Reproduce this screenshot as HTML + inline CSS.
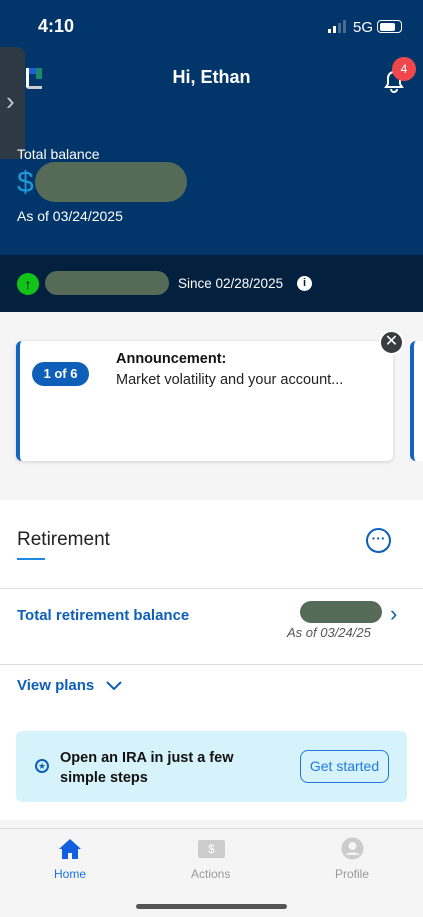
<!DOCTYPE html>
<html><head><style>
*{margin:0;padding:0;box-sizing:border-box}
body{width:423px;height:917px;overflow:hidden;font-family:"Liberation Sans",sans-serif;background:#f5f5f5;position:relative}
.a{position:absolute}
</style></head><body>
<div class="a" style="left:0;top:0;width:423px;height:255px;background:#02366a"></div>
<div class="a" style="left:0;top:255px;width:423px;height:57px;background:#03203f"></div>
<div class="a" style="left:38px;top:16px;color:#fff;font-size:18px;font-weight:bold">4:10</div>
<div class="a" style="left:328px;top:29px;width:3px;height:4px;background:#fff"></div>
<div class="a" style="left:333px;top:26px;width:3px;height:7px;background:#fff"></div>
<div class="a" style="left:338px;top:23px;width:3px;height:10px;background:#4a6b8f"></div>
<div class="a" style="left:343px;top:20px;width:3px;height:13px;background:#4a6b8f"></div>
<div class="a" style="left:353px;top:19px;color:#fff;font-size:15px">5G</div>
<div class="a" style="left:377px;top:20px;width:25px;height:13px;border:1.5px solid #fff;border-radius:4px;padding:1.5px"><div style="width:15px;height:100%;background:#fff;border-radius:2px"></div></div>
<div class="a" style="left:0;top:47px;width:25px;height:112px;background:#2d3a46;border-radius:0 8px 8px 0"></div>
<div class="a" style="left:6px;top:86px;color:#b8c6d6;font-size:26px">›</div>
<div class="a" style="left:26px;top:68px;width:16px;height:21px;border-left:3px solid #fff;border-bottom:3px solid #ccc;border-radius:0 0 0 3px"></div>
<div class="a" style="left:29px;top:68px;width:8px;height:6px;background:#1d5fd6"></div>
<div class="a" style="left:36px;top:68px;width:6px;height:11px;background:#1a8a6a"></div>
<div class="a" style="left:0;top:67px;width:423px;text-align:center;color:#fff;font-size:18px;font-weight:bold">Hi, Ethan</div>
<svg class="a" style="left:381px;top:68px" width="26" height="26" viewBox="0 0 26 26"><path d="M5 19h16l-2-3v-6a6 6 0 0 0-12 0v6z M10 21a3 3 0 0 0 6 0" fill="none" stroke="#fff" stroke-width="2"/></svg>
<div class="a" style="left:392px;top:57px;width:24px;height:24px;border-radius:50%;background:#f0474d;color:#fff;font-size:12px;text-align:center;line-height:24px">4</div>
<div class="a" style="left:17px;top:146px;color:#fff;font-size:14px">Total balance</div>
<div class="a" style="left:17px;top:166px;color:#1e9ad8;font-size:30px">$</div>
<div class="a" style="left:35px;top:162px;width:152px;height:40px;background:#556b57;border-radius:20px"></div>
<div class="a" style="left:17px;top:208px;color:#fff;font-size:14px">As of 03/24/2025</div>
<div class="a" style="left:17px;top:273px;width:22px;height:22px;border-radius:50%;background:#12c41a;color:#000;text-align:center;font-size:14px;line-height:22px;font-weight:bold">↑</div>
<div class="a" style="left:45px;top:271px;width:124px;height:24px;background:#556b57;border-radius:12px"></div>
<div class="a" style="left:178px;top:276px;color:#fff;font-size:13.5px">Since 02/28/2025</div>
<div class="a" style="left:297px;top:276px;width:15px;height:15px;border-radius:50%;background:#fff;color:#03203f;font-size:11px;font-weight:bold;text-align:center;line-height:15px">i</div>
<div class="a" style="left:0;top:312px;width:423px;height:188px;background:#f5f5f5"></div>
<div class="a" style="left:16px;top:341px;width:377px;height:120px;background:#fff;border-left:4px solid #1565c0;border-radius:6px;box-shadow:0 1px 4px rgba(0,0,0,.15)"></div>
<div class="a" style="left:410px;top:341px;width:13px;height:120px;background:#fff;border-left:4px solid #1565c0;border-radius:6px 0 0 6px"></div>
<div class="a" style="left:32px;top:362px;width:57px;height:24px;background:#0d5fb8;border-radius:12px;color:#fff;font-size:13px;font-weight:bold;text-align:center;line-height:24px">1 of 6</div>
<div class="a" style="left:116px;top:351px;font-size:14.5px;font-weight:bold;color:#111">Announcement:</div>
<div class="a" style="left:116px;top:372px;font-size:14.5px;color:#222">Market volatility and your account...</div>
<div class="a" style="left:379px;top:330px;width:25px;height:25px;border-radius:50%;background:#3a3d40;border:2px solid #fff;color:#fff;text-align:center;font-size:16px;line-height:20px">✕</div>
<div class="a" style="left:0;top:500px;width:423px;height:320px;background:#fff"></div>
<div class="a" style="left:17px;top:529px;font-size:19px;color:#222">Retirement</div>
<div class="a" style="left:17px;top:558px;width:28px;height:2px;background:#1e88e5"></div>
<div class="a" style="left:366px;top:528px;width:25px;height:25px;border:2px solid #0d5fb8;border-radius:50%;color:#0d5fb8;text-align:center;font-size:14px;line-height:17px;font-weight:bold">···</div>
<div class="a" style="left:0;top:588px;width:423px;height:1px;background:#ddd"></div>
<div class="a" style="left:17px;top:607px;font-size:15px;color:#0d5fb8;font-weight:bold">Total retirement balance</div>
<div class="a" style="left:300px;top:601px;width:82px;height:22px;background:#556b57;border-radius:11px"></div>
<div class="a" style="left:287px;top:625px;font-size:13px;color:#555;font-style:italic">As of 03/24/25</div>
<div class="a" style="left:390px;top:601px;color:#0d5fb8;font-size:22px">›</div>
<div class="a" style="left:0;top:664px;width:423px;height:1px;background:#ddd"></div>
<div class="a" style="left:17px;top:677px;font-size:15px;color:#0d5fb8;font-weight:bold">View plans</div>
<svg class="a" style="left:105px;top:679px" width="18" height="12"><path d="M2 3l7 7 7-7" fill="none" stroke="#0d5fb8" stroke-width="2"/></svg>
<div class="a" style="left:16px;top:731px;width:391px;height:71px;background:#d6f2fa;border-radius:6px"></div>
<div class="a" style="left:35px;top:759px;width:14px;height:14px;border:2px solid #0d5fb8;border-radius:50%;color:#0d5fb8;font-size:9px;text-align:center;line-height:10px">★</div>
<div class="a" style="left:60px;top:748px;font-size:14.5px;font-weight:bold;color:#111;line-height:20px">Open an IRA in just a few<br>simple steps</div>
<div class="a" style="left:300px;top:750px;width:89px;height:33px;border:1.5px solid #1e7ae0;border-radius:8px;color:#1e7ae0;font-size:14px;text-align:center;line-height:30px">Get started</div>
<div class="a" style="left:0;top:828px;width:423px;height:1px;background:#ddd"></div>
<svg class="a" style="left:58px;top:838px" width="24" height="22"><path d="M12 1L1 11h3v10h6v-6h4v6h6V11h3z" fill="#1060e0"/></svg>
<div class="a" style="left:54px;top:867px;font-size:12px;color:#1a73e8">Home</div>
<div class="a" style="left:198px;top:840px;width:27px;height:18px;background:#ccc;border-radius:2px;color:#fff;font-size:12px;text-align:center;line-height:18px">$</div>
<div class="a" style="left:191px;top:867px;font-size:12px;color:#999">Actions</div>
<svg class="a" style="left:341px;top:837px" width="23" height="23"><circle cx="11.5" cy="11.5" r="11" fill="#ccc"/><circle cx="11.5" cy="9" r="4" fill="#f5f5f5"/><path d="M4 18a9 6 0 0 1 15 0" fill="#f5f5f5"/></svg>
<div class="a" style="left:335px;top:867px;font-size:12px;color:#999">Profile</div>
<div class="a" style="left:136px;top:904px;width:151px;height:5px;background:#555;border-radius:3px"></div>
</body></html>
